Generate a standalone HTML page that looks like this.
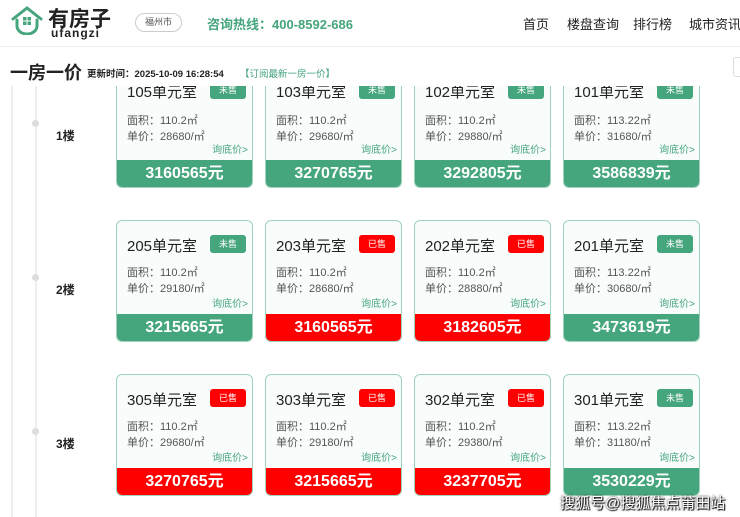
<!DOCTYPE html>
<html><head><meta charset="utf-8"><style>
*{margin:0;padding:0;box-sizing:border-box}
html,body{width:740px;height:517px;overflow:hidden}
body{background:#fff;font-family:"Liberation Sans","Noto Sans CJK SC",sans-serif;color:#222;position:relative}
.hdr{position:absolute;left:0;top:0;width:740px;height:47px;border-bottom:1px solid #eee}
.abs{position:absolute;white-space:nowrap}
.nav{font-size:13px;color:#222;top:14px}
.clip{position:absolute;left:0;top:86px;width:740px;height:431px;overflow:hidden}
.in{position:absolute;left:0;top:-86px;width:740px;height:517px}
.card{position:absolute;width:137px;height:122px;border:1px solid #9fd3bd;border-radius:6px;background:#f8fcfb;overflow:hidden}
.card .t{position:absolute;left:10px;top:14px;font-size:15px;color:#222}
.card .b{position:absolute;left:93px;top:14px;width:36px;height:18px;border-radius:3px;color:#fff;font-size:9px;text-align:center;line-height:18px}
.card .l{position:absolute;left:10px;font-size:11px;color:#555}
.card .q{position:absolute;right:4px;top:74px;font-size:10px;color:#45a57d}
.card .p{position:absolute;left:0;bottom:0;width:100%;height:27px;color:#fff;font-weight:bold;font-size:16px;text-align:center;line-height:27px}
.g{background:#45a57d}.r{background:#fe0000}
.fl{position:absolute;left:56px;font-size:12px;font-weight:bold}
</style></head><body>
<div class="hdr">
<svg class="abs" style="left:10px;top:5px" width="34" height="30" viewBox="0 0 34 30"><path d="M3 14 L17 3 L31 14" fill="none" stroke="#45a57d" stroke-width="3" stroke-linecap="round"/><path d="M7 15 V21 A10 8 0 0 0 27 21 V15" fill="none" stroke="#45a57d" stroke-width="3" stroke-linecap="round"/><rect x="13" y="12" width="3.5" height="3.5" fill="#45a57d"/><rect x="17.5" y="12" width="3.5" height="3.5" fill="#45a57d"/><rect x="13" y="16.5" width="3.5" height="3.5" fill="#45a57d"/><rect x="17.5" y="16.5" width="3.5" height="3.5" fill="#45a57d"/></svg>
<div class="abs" style="left:48px;top:3px;font-size:21px;font-weight:bold;color:#222">有房子</div>
<div class="abs" style="left:51px;top:26px;font-size:12px;font-weight:bold;color:#222;letter-spacing:1px">ufangzi</div>
<div class="abs" style="left:135px;top:13px;width:47px;height:19px;border:1px solid #ccc;border-radius:10px;font-size:9px;color:#555;text-align:center;line-height:17px">福州市</div>
<div class="abs" style="left:207px;top:14px;font-size:13px;font-weight:bold;color:#45a57d">咨询热线：400-8592-686</div>
<div class="abs nav" style="left:523px">首页</div>
<div class="abs nav" style="left:567px">楼盘查询</div>
<div class="abs nav" style="left:633px">排行榜</div>
<div class="abs nav" style="left:689px">城市资讯</div>
</div>
<div class="abs" style="left:10px;top:59px;font-size:18px;font-weight:bold">一房一价</div>
<div class="abs" style="left:87px;top:66px;font-size:9.5px;font-weight:bold">更新时间：2025-10-09 16:28:54</div>
<div class="abs" style="left:240px;top:66px;font-size:9.5px;color:#45a57d">【订阅最新一房一价】</div>
<div class="abs" style="left:733px;top:57px;width:20px;height:20px;border:1px solid #ddd;border-radius:3px"></div>
<div class="clip"><div class="in">
<div class="abs" style="left:11px;top:86px;width:2px;height:431px;background:#eee"></div>
<div class="abs" style="left:35px;top:86px;width:2px;height:431px;background:#eee"></div>
<div class="abs" style="left:32px;top:120px;width:7px;height:7px;border-radius:50%;background:#ddd"></div>
<div class="abs" style="left:32px;top:274px;width:7px;height:7px;border-radius:50%;background:#ddd"></div>
<div class="abs" style="left:32px;top:428px;width:7px;height:7px;border-radius:50%;background:#ddd"></div>
<div class="fl" style="top:127px">1楼</div>
<div class="fl" style="top:281px">2楼</div>
<div class="fl" style="top:435px">3楼</div>

<div class="card" style="left:116px;top:66px"><div class="t">105单元室</div><div class="b g">未售</div><div class="l" style="top:45px">面积：110.2㎡</div><div class="l" style="top:61px">单价：28680/㎡</div><div class="q">询底价&gt;</div><div class="p g">3160565元</div></div>
<div class="card" style="left:265px;top:66px"><div class="t">103单元室</div><div class="b g">未售</div><div class="l" style="top:45px">面积：110.2㎡</div><div class="l" style="top:61px">单价：29680/㎡</div><div class="q">询底价&gt;</div><div class="p g">3270765元</div></div>
<div class="card" style="left:414px;top:66px"><div class="t">102单元室</div><div class="b g">未售</div><div class="l" style="top:45px">面积：110.2㎡</div><div class="l" style="top:61px">单价：29880/㎡</div><div class="q">询底价&gt;</div><div class="p g">3292805元</div></div>
<div class="card" style="left:563px;top:66px"><div class="t">101单元室</div><div class="b g">未售</div><div class="l" style="top:45px">面积：113.22㎡</div><div class="l" style="top:61px">单价：31680/㎡</div><div class="q">询底价&gt;</div><div class="p g">3586839元</div></div>

<div class="card" style="left:116px;top:220px"><div class="t">205单元室</div><div class="b g">未售</div><div class="l" style="top:43px">面积：110.2㎡</div><div class="l" style="top:59px">单价：29180/㎡</div><div class="q">询底价&gt;</div><div class="p g">3215665元</div></div>
<div class="card" style="left:265px;top:220px"><div class="t">203单元室</div><div class="b r">已售</div><div class="l" style="top:43px">面积：110.2㎡</div><div class="l" style="top:59px">单价：28680/㎡</div><div class="q">询底价&gt;</div><div class="p r">3160565元</div></div>
<div class="card" style="left:414px;top:220px"><div class="t">202单元室</div><div class="b r">已售</div><div class="l" style="top:43px">面积：110.2㎡</div><div class="l" style="top:59px">单价：28880/㎡</div><div class="q">询底价&gt;</div><div class="p r">3182605元</div></div>
<div class="card" style="left:563px;top:220px"><div class="t">201单元室</div><div class="b g">未售</div><div class="l" style="top:43px">面积：113.22㎡</div><div class="l" style="top:59px">单价：30680/㎡</div><div class="q">询底价&gt;</div><div class="p g">3473619元</div></div>

<div class="card" style="left:116px;top:374px"><div class="t">305单元室</div><div class="b r">已售</div><div class="l" style="top:43px">面积：110.2㎡</div><div class="l" style="top:59px">单价：29680/㎡</div><div class="q">询底价&gt;</div><div class="p r">3270765元</div></div>
<div class="card" style="left:265px;top:374px"><div class="t">303单元室</div><div class="b r">已售</div><div class="l" style="top:43px">面积：110.2㎡</div><div class="l" style="top:59px">单价：29180/㎡</div><div class="q">询底价&gt;</div><div class="p r">3215665元</div></div>
<div class="card" style="left:414px;top:374px"><div class="t">302单元室</div><div class="b r">已售</div><div class="l" style="top:43px">面积：110.2㎡</div><div class="l" style="top:59px">单价：29380/㎡</div><div class="q">询底价&gt;</div><div class="p r">3237705元</div></div>
<div class="card" style="left:563px;top:374px"><div class="t">301单元室</div><div class="b g">未售</div><div class="l" style="top:43px">面积：113.22㎡</div><div class="l" style="top:59px">单价：31180/㎡</div><div class="q">询底价&gt;</div><div class="p g">3530229元</div></div>
</div></div>
<div class="abs" style="left:560px;top:492px;font-size:15px;color:#fff;text-shadow:0 0 2px #000,1px 1px 1px #000">搜狐号@搜狐焦点莆田站</div>
</body></html>
